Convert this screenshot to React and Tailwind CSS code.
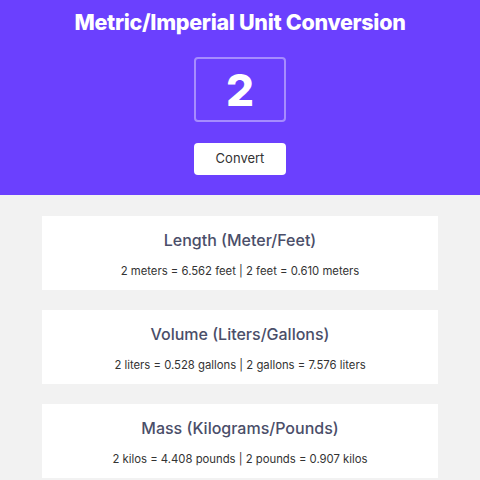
import React, { useState } from 'react';

const factors = [
  { title: 'Length (Meter/Feet)', a: 'meters', b: 'feet', f: 3.281 },
  { title: 'Volume (Liters/Gallons)', a: 'liters', b: 'gallons', f: 0.264 },
  { title: 'Mass (Kilograms/Pounds)', a: 'kilos', b: 'pounds', f: 2.204 },
];

const App = () => {
  const [value, setValue] = useState('2');
  const [num, setNum] = useState(2);

  return (
    <div className="min-h-screen bg-[#f2f2f2]" style={{ fontFamily: 'Inter, "Noto Sans", sans-serif' }}>
      <div className="bg-[#6b40fe] h-[195px] flex flex-col items-center pt-[6px]">
        <h1 className="text-[21.5px] leading-[32px] font-extrabold text-white tracking-[-0.3px]">
          Metric/Imperial Unit Conversion
        </h1>
        <input
          type="text"
          value={value}
          onChange={(e) => setValue(e.target.value)}
          className="mt-[19px] w-[92px] h-[65px] rounded-[4px] border-2 border-white/40 bg-transparent text-center text-white text-[44px] font-extrabold outline-none"
        />
        <button
          onClick={() => setNum(Number(value) || 0)}
          className="mt-[21px] w-[92px] h-[32px] rounded-[4px] bg-white text-[#333] text-[13px]"
        >
          Convert
        </button>
      </div>

      <div className="w-[396px] mx-auto pt-[21px] flex flex-col gap-[20px]">
        {factors.map((c) => (
          <div key={c.title} className="bg-white flex flex-col items-center pt-3 h-[74px]">
            <h2 className="text-[16px] leading-[24px] font-medium text-[#4a4e69]">{c.title}</h2>
            <p className="mt-[9px] text-[11.3px] leading-[20px] text-[#333]">
              {num} {c.a} = {(num * c.f).toFixed(3)} {c.b} | {num} {c.b} = {(num / c.f).toFixed(3)} {c.a}
            </p>
          </div>
        ))}
      </div>
    </div>
  );
};

export default App;
